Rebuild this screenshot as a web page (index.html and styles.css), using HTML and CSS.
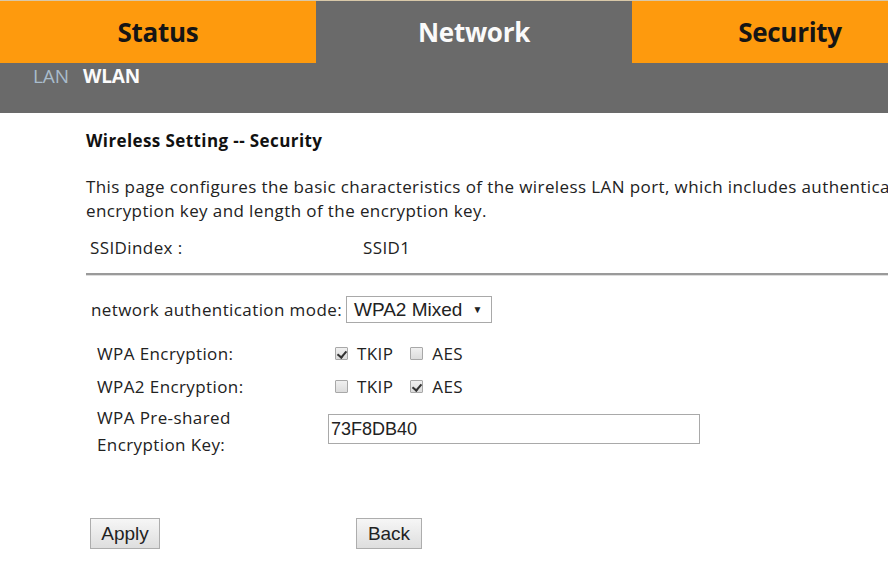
FILE: index.html
```html
<!DOCTYPE html>
<html>
<head>
<meta charset="utf-8">
<link rel="stylesheet" href="styles.css">
</head>
<body>
<div class="topnav">
  <div class="tab tab-orange">Status</div>
  <div class="tab tab-active">Network</div>
  <div class="tab tab-orange">Security</div>
</div>
<div class="subnav">
  <span class="sub sub-lan">LAN</span>
  <span class="sub sub-wlan">WLAN</span>
</div>
<div class="content">
  <div class="title">Wireless Setting -- Security</div>
  <p class="desc">This page configures the basic characteristics of the wireless LAN port, which includes authentication and<br>encryption key and length of the encryption key.</p>
  <div class="ssid-row">
    <span class="ssid-label">SSIDindex :</span>
    <span class="ssid-value">SSID1</span>
  </div>
  <div class="divider"></div>
  <div class="auth-row">
    <span>network authentication mode:</span>
    <div class="select"><span>WPA2 Mixed</span><span class="arrow">▼</span></div>
  </div>
  <div class="form">
    <div class="lbl">WPA Encryption:</div>
    <div class="ctl">
      <span class="cb checked"></span><span class="opt">TKIP</span>
      <span class="cb"></span><span class="opt">AES</span>
    </div>
    <div class="lbl">WPA2 Encryption:</div>
    <div class="ctl">
      <span class="cb"></span><span class="opt">TKIP</span>
      <span class="cb checked"></span><span class="opt">AES</span>
    </div>
    <div class="lbl lbl-key">WPA Pre-shared<br>Encryption Key:</div>
    <div class="ctl ctl-key"><div class="textbox">73F8DB40</div></div>
  </div>
  <div class="buttons">
    <div class="btn btn-apply">Apply</div>
    <div class="btn btn-back">Back</div>
  </div>
</div>
</body>
</html>
```
FILE: styles.css
```css
html, body {
  margin: 0;
  padding: 0;
  width: 888px;
  height: 573px;
  overflow: hidden;
  background: #fff;
  font-family: "Open Sans", "Noto Sans", sans-serif;
  color: #222;
}
.topnav {
  display: flex;
  height: 63px;
  border-top: 1px solid #d8c8a8;
  box-sizing: border-box;
}
.tab {
  flex: 0 0 316px;
  display: flex;
  align-items: center;
  justify-content: center;
  font-size: 26px;
  font-weight: 700;
  letter-spacing: -0.3px;
  padding-bottom: 1px;
  box-sizing: border-box;
}
.tab-orange {
  background: #fe9a0d;
  color: #151515;
}
.tab-active {
  background: #6a6a6a;
  color: #fafafa;
}
.subnav {
  height: 50px;
  background: #6a6a6a;
  padding-left: 33px;
  display: flex;
  align-items: flex-start;
  box-sizing: border-box;
  gap: 14px;
  font-size: 19px;
  letter-spacing: -0.1px;
}
.sub-lan {
  color: #a9bccc;
}
.sub-wlan {
  color: #fbfbfb;
  font-weight: 700;
}
.content {
  padding-left: 86px;
  font-size: 17px;
  letter-spacing: 0.4px;
}
.title {
  margin-top: 17px;
  font-size: 17px;
  font-weight: 700;
  color: #111;
  letter-spacing: 0.4px;
  line-height: 22px;
}
.desc {
  margin: 23px 0 0 0;
  line-height: 24px;
  white-space: nowrap;
  color: #222;
}
.ssid-row {
  display: flex;
  line-height: 24px;
  margin-top: 13px;
  padding-left: 4px;
}
.ssid-label {
  width: 273px;
}
.divider {
  margin-top: 13px;
  height: 2px;
  background: #9a9a9a;
  border-bottom: 1px solid #ddd;
}
.auth-row {
  display: flex;
  align-items: center;
  margin-top: 20px;
  padding-left: 5px;
  gap: 4px;
}
.select {
  display: flex;
  align-items: center;
  height: 27px;
  width: 146px;
  box-sizing: border-box;
  border: 1px solid #a9a9a9;
  padding-left: 7px;
  font-family: "Liberation Sans", Arial, sans-serif;
  font-size: 19px;
  letter-spacing: 0;
  color: #222;
}
.arrow {
  font-size: 10px;
  margin-left: 10px;
}
.form {
  display: grid;
  grid-template-columns: 231px auto;
  grid-auto-rows: 33px;
  margin-top: 14px;
  padding-left: 11px;
}
.lbl {
  display: flex;
  align-items: center;
}
.ctl {
  display: flex;
  align-items: center;
  padding-left: 7px;
}
.form > .lbl-key {
  line-height: 27px;
  height: 54px;
  margin-top: 1px;
}
.form > .ctl-key {
  padding-left: 0;
  height: 54px;
  margin-top: -1px;
}
.cb {
  width: 13px;
  height: 13px;
  box-sizing: border-box;
  border: 1px solid #a8a8a8;
  background: linear-gradient(#f0f0f0, #dcdcdc);
  border-radius: 1px;
  position: relative;
  margin-right: 9px;
}
.cb.checked::after {
  content: "";
  position: absolute;
  left: 3px;
  top: 1px;
  width: 4px;
  height: 7px;
  border-right: 2px solid #333;
  border-bottom: 2px solid #333;
  transform: rotate(40deg);
}
.opt {
  margin-right: 17px;
  color: #222;
}
.textbox {
  width: 372px;
  height: 30px;
  box-sizing: border-box;
  border: 1px solid #a9a9a9;
  padding-left: 2px;
  display: flex;
  align-items: center;
  font-family: "Liberation Sans", Arial, sans-serif;
  font-size: 18px;
  letter-spacing: 0;
  color: #222;
}
.buttons {
  display: flex;
  margin-top: 82px;
  padding-left: 4px;
}
.btn {
  height: 31px;
  box-sizing: border-box;
  border: 1px solid #adadad;
  background: linear-gradient(#f6f6f6, #dedede);
  display: flex;
  align-items: center;
  justify-content: center;
  font-family: "Liberation Sans", Arial, sans-serif;
  font-size: 19px;
  letter-spacing: 0;
  color: #222;
}
.btn-apply {
  width: 70px;
}
.btn-back {
  width: 66px;
  margin-left: 196px;
}
```
